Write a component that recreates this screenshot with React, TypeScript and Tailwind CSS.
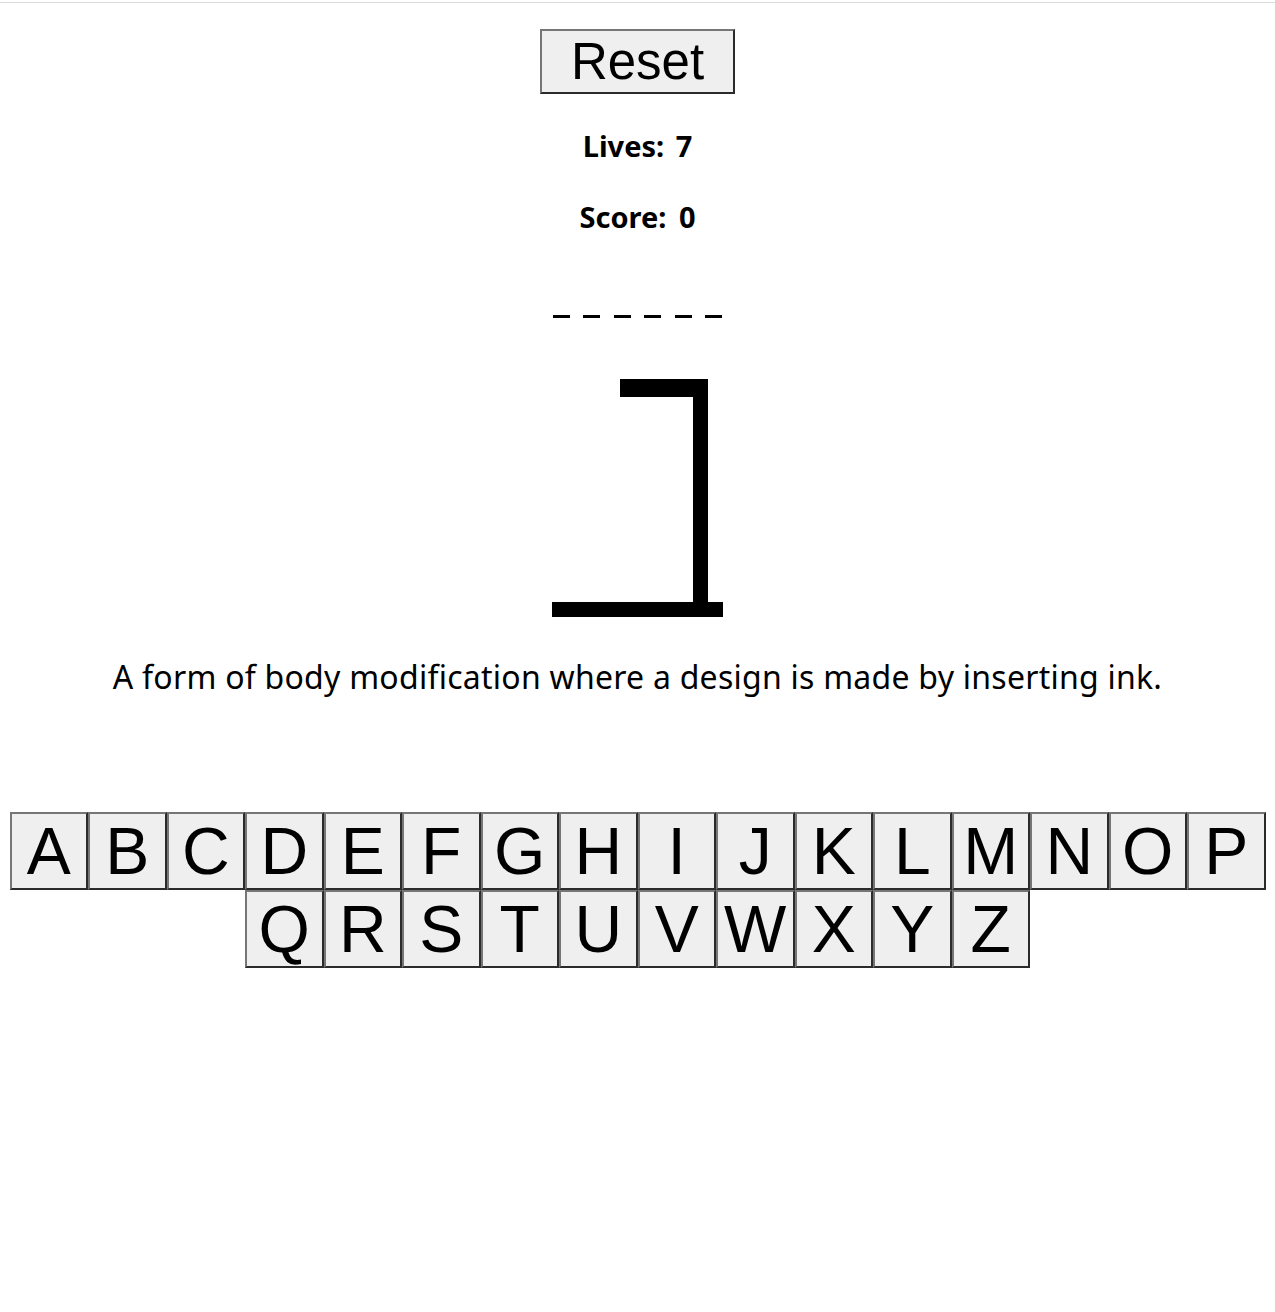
import { useState } from 'react'

const LETTERS = 'ABCDEFGHIJKLMNOPQRSTUVWXYZ'.split('')

const btn =
  "bg-[#efefef] border-2 border-t-[#767676] border-l-[#767676] border-b-[#2b2b2b] border-r-[#2b2b2b] text-black font-['Liberation_Sans',Arial,sans-serif] flex items-center justify-center leading-none"

const Gallows = () => (
  <svg width="171" height="238" viewBox="0 0 171 238" className="block">
    <rect x="68" y="0" width="88" height="18" fill="#000" />
    <rect x="141" y="0" width="15" height="223" fill="#000" />
    <rect x="0" y="223" width="171" height="15" fill="#000" />
  </svg>
)

const App = () => {
  const [lives] = useState(7)
  const [score] = useState(0)
  const word = 'TATTOO'

  return (
    <div className="min-h-screen bg-white">
      <div className="h-[2px]" />
      <div className="h-px bg-[#dcdcdc]" />

      <div className="flex flex-col items-center">
        {/* Controls */}
        <button className={`${btn} mt-[26px] w-[195px] h-[65px] text-[51px]`}>Reset</button>

        <p className="mt-[35px] h-[34px] leading-[34px] text-[29px] font-bold text-black [word-spacing:4px] font-['Noto_Sans',sans-serif]">
          Lives: {lives}
        </p>
        <p className="mt-[37px] h-[34px] leading-[34px] text-[29px] font-bold text-black [word-spacing:5px] font-['Noto_Sans',sans-serif]">
          Score: {score}
        </p>

        {/* Word */}
        <div className="mt-[81px] flex gap-[13.6px]">
          {word.split('').map((_, i) => (
            <span key={i} className="block w-[17px] h-[3px] bg-black" />
          ))}
        </div>

        {/* Drawing */}
        <div className="mt-[61px]">
          <Gallows />
        </div>

        {/* Hint */}
        <p className="mt-[40px] h-[40px] leading-[40px] text-[32px] tracking-[0.25px] text-black font-['Noto_Sans',sans-serif]">
          A form of body modification where a design is made by inserting ink.
        </p>

        {/* Keyboard */}
        <div className="mt-[115px] w-full flex flex-wrap justify-center">
          {LETTERS.map(l => (
            <button key={l} className={`${btn} w-[78.5px] h-[78px] text-[66px]`}>
              {l}
            </button>
          ))}
        </div>
      </div>
    </div>
  )
}

export default App
